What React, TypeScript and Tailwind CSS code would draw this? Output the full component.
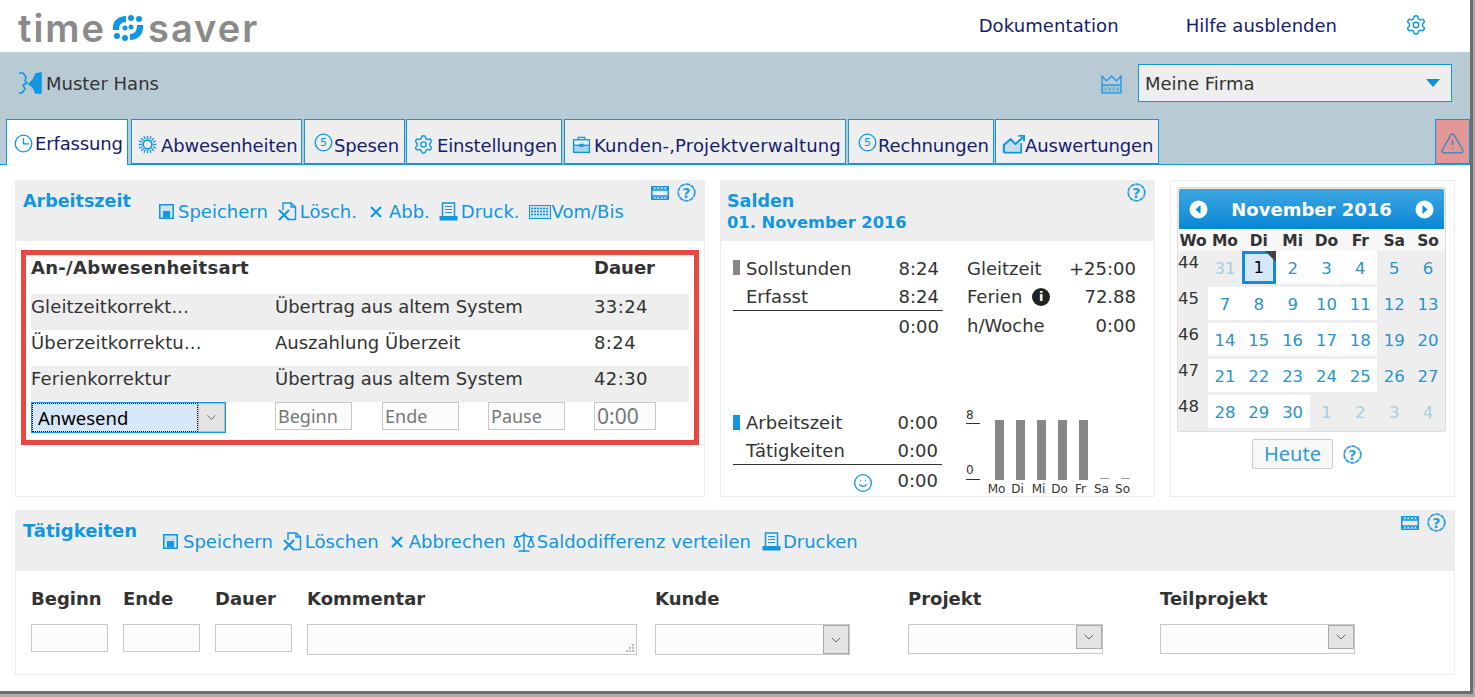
import { ReactNode } from "react";
import { ChevronDown, Scale, Settings, Smile, TriangleAlert } from "lucide-react";

const blue = "#1296e0";

function Svg({ size = 20, children, className = "" }: { size?: number; children: ReactNode; className?: string }) {
  return (
    <svg width={size} height={size} viewBox="0 0 24 24" fill="none" stroke={blue} strokeWidth="1.7" className={`shrink-0 ${className}`}>
      {children}
    </svg>
  );
}

function LogoMark() {
  return (
    <svg width="32" height="29" viewBox="0 0 32 29" className="shrink-0">
      <path d="M1 17 C0 8 6 3 14 3 L14 9 C9 9 7 12 7 17 Z" fill="#1296e0" />
      <path d="M31 12 C32 21 26 27 18 27 L18 21 C23 21 25 17 25 12 Z" fill="#1296e0" />
      <circle cx="19" cy="5" r="3" fill="#1296e0" />
      <circle cx="27" cy="6" r="3" fill="#1296e0" />
      <circle cx="5" cy="23" r="3" fill="#1296e0" />
      <circle cx="13" cy="25" r="3" fill="#1296e0" />
      <circle cx="13" cy="15" r="2.5" fill="#1296e0" />
      <circle cx="19" cy="14" r="2.5" fill="#1296e0" />
    </svg>
  );
}

function PersonIcon() {
  return (
    <svg width="24" height="22" viewBox="0 0 24 22" fill="none" stroke={blue} strokeWidth="1.6" className="shrink-0">
      <path d="M1 1 H5 L8 5 L7 9 L9 11 L5 13 L7 17 L4 21 H1" />
      <path d="M23 1 V21 H18 L15 15 L11 12 L15 8 L18 2 Z" fill={blue} />
    </svg>
  );
}

function ClockIcon() {
  return (
    <Svg size={19}>
      <circle cx="12" cy="12" r="10.5" />
      <path d="M12 5 V12.5 H19" />
    </Svg>
  );
}

function SunIcon() {
  return (
    <Svg size={19}>
      <circle cx="12" cy="12" r="5.5" strokeWidth="2" />
      <path d="M12 1 V5 M12 19 V23 M1 12 H5 M19 12 H23 M4 4 L7 7 M17 17 L20 20 M20 4 L17 7 M7 17 L4 20 M7.5 1.5 L9 5 M16.5 1.5 L15 5 M7.5 22.5 L9 19 M16.5 22.5 L15 19 M1.5 7.5 L5 9 M1.5 16.5 L5 15 M22.5 7.5 L19 9 M22.5 16.5 L19 15" />
    </Svg>
  );
}

function CoinIcon() {
  return (
    <svg width="19" height="19" viewBox="0 0 24 24" fill="none" className="shrink-0 -mt-[4px]">
      <circle cx="12" cy="12" r="10.5" stroke={blue} strokeWidth="1.7" />
      <text x="12" y="17" textAnchor="middle" fontSize="14" fontFamily="DejaVu Sans" fill={blue}>5</text>
    </svg>
  );
}

function GearIcon({ size = 21 }: { size?: number }) {
  return <Settings size={size} color={blue} strokeWidth={1.6} className="shrink-0" />;
}

function CaseIcon() {
  return (
    <Svg size={19}>
      <path d="M8 6 V3 H16 V6" />
      <rect x="2" y="6" width="20" height="16" />
      <path d="M2 13 H22" />
      <rect x="9.5" y="11" width="5" height="4" fill={blue} stroke="none" />
      <path d="M2 14 H22 V22 H2 Z" fill={blue} fillOpacity="0.3" stroke="none" />
    </Svg>
  );
}

function ChartIcon() {
  return (
    <svg width="23" height="20" viewBox="0 0 24 20" fill="none" stroke={blue} strokeWidth="1.8" className="shrink-0">
      <path d="M2 19 V11 L9 5 L14 10 L22 3" strokeWidth="2.2" />
      <path d="M17 1.5 H23 V7" strokeWidth="2" />
      <path d="M2 19 H20 V9" />
      <path d="M3 18 V12 L9 7 L14 12 L19 8 V18 Z" fill={blue} fillOpacity="0.18" stroke="none" />
    </svg>
  );
}

function CrownIcon() {
  return (
    <svg width="21" height="19" viewBox="0 0 21 19" fill="none" stroke={blue} strokeWidth="1.2" className="shrink-0">
      <path d="M1 10 V1 L5.5 6 L10.5 1 L15.5 6 L20 1 V10" />
      <rect x="1" y="10" width="19" height="8" fill={blue} fillOpacity="0.2" />
      <path d="M4 14 H5 M8 14 H9 M12 14 H13 M16 14 H17" strokeWidth="1.5" />
    </svg>
  );
}

function SaveIcon() {
  return (
    <svg width="15" height="15" viewBox="0 0 15 15" fill="none" className="shrink-0">
      <rect x="0.75" y="0.75" width="13.5" height="13.5" stroke={blue} strokeWidth="1.5" fill={blue} fillOpacity="0.15" />
      <rect x="4" y="7" width="7" height="6.5" fill={blue} />
    </svg>
  );
}

function DeleteIcon() {
  return (
    <svg width="19" height="19" viewBox="0 0 19 19" fill="none" stroke={blue} strokeWidth="1.4" className="shrink-0">
      <path d="M5 8 V1 H13 L17.5 5 V17.5 H11" />
      <path d="M13 1 V5 H17.5" />
      <path d="M1 8 L11 18 M11 8 L1 18" strokeWidth="2" />
    </svg>
  );
}

function CrossIcon() {
  return (
    <svg width="14" height="14" viewBox="0 0 14 14" fill="none" stroke={blue} strokeWidth="2.2" className="shrink-0">
      <path d="M2 2 L12 12 M12 2 L2 12" />
    </svg>
  );
}

function PrintIcon() {
  return (
    <svg width="19" height="19" viewBox="0 0 19 19" fill="none" stroke={blue} className="shrink-0">
      <path d="M3.5 14 V1 H15.5 V14" strokeWidth="1.5" />
      <path d="M6 4.5 H13 M6 7.5 H13 M6 10.5 H13" strokeWidth="1.2" />
      <rect x="0.5" y="14" width="18" height="4.5" fill={blue} stroke="none" />
    </svg>
  );
}

function KeysIcon() {
  return (
    <svg width="22" height="14" viewBox="0 0 22 14" fill="none" stroke={blue} className="shrink-0">
      <rect x="0.5" y="0.5" width="21" height="13" fill={blue} fillOpacity="0.15" />
      <path d="M2 3.5 H20 M2 6.5 H20 M2 9.5 H20" strokeWidth="1.5" strokeDasharray="2 1" />
    </svg>
  );
}

function FilmIcon() {
  return (
    <svg width="18" height="14" viewBox="0 0 18 14" fill="none" stroke={blue} className="shrink-0">
      <rect x="0.75" y="0.75" width="16.5" height="12.5" strokeWidth="1.5" />
      <path d="M0.5 4 H17.5 M0.5 10 H17.5" strokeWidth="1.5" />
      <path d="M1 2.4 H17 M1 11.6 H17" strokeWidth="1.5" strokeDasharray="2 1.5" />
    </svg>
  );
}

function HelpIcon({ size = 19 }: { size?: number }) {
  return (
    <svg width={size} height={size} viewBox="0 0 24 24" fill="none" className="shrink-0">
      <circle cx="12" cy="12" r="10.5" stroke="#2a9fe0" strokeWidth="2.2" strokeDasharray="6 0.8" />
      <text x="12" y="18.5" textAnchor="middle" fontSize="18" fontWeight="700" fontFamily="DejaVu Sans" fill="#2a9fe0">?</text>
    </svg>
  );
}

function Tab({ w, ml, pl, gap, icon, label, active, track = "tracking-[-0.15px]" }: { w: string; ml: string; pl: string; gap: string; icon: ReactNode; label: string; active?: boolean; track?: string }) {
  return (
    <div
      className={`${w} ${ml} ${pl} ${gap} flex items-center shrink-0 border border-[#1296e0] ${
        active
          ? "h-[46px] bg-white border-b-0 pt-[2px] -mb-[1px] z-10"
          : "h-[45px] bg-[#eeeeee] pt-[5px]"
      }`}
    >
      {icon}
      <span className={`text-[#14206e] ${track} ${active ? "" : "mt-[2px]"}`}>{label}</span>
    </div>
  );
}

function ToolItem({ icon, label, gap, ml = "" }: { icon: ReactNode; label: string; gap: string; ml?: string }) {
  return (
    <div className={`flex items-center ${gap} ${ml} text-[#1296e0]`}>
      {icon}
      <span>{label}</span>
    </div>
  );
}

function TimeInput({ value, w = "w-[77px]", size = "text-[18px]" }: { value: string; w?: string; size?: string }) {
  return (
    <div className={`${w} ${size} h-[28px] border border-[#c8c8c8] bg-[#fcfcfc] pl-[2px] font-['Noto_Sans',sans-serif] leading-[26px] text-[#777]`}>
      {value}
    </div>
  );
}

function FieldSelect({ h, btnH }: { h: string; btnH: string }) {
  return (
    <div className={`w-[195px] ${h} border border-[#c8c8c8] bg-[#fcfcfc] flex justify-end items-start`}>
      <div className={`w-[26px] ${btnH} border border-[#aaaaaa] bg-[#e4e4e4] flex items-center justify-center`}>
        <ChevronDown size={16} color="#444" strokeWidth={1.2} />
      </div>
    </div>
  );
}

function SaldoRow({ marker, label, value, line, shift }: { marker?: string; label?: ReactNode; value: string; line?: boolean; shift?: string }) {
  return (
    <div className={`flex items-center pr-[4px] ${shift ?? ""} ${line ? "border-b border-[#333] h-[29px]" : "h-[28px]"}`}>
      <div className={`w-[7px] h-[15px] mr-[6px] -mt-[1px] ${marker ?? ""}`} />
      <span>{label}</span>
      <span className="ml-auto">{value}</span>
    </div>
  );
}

function RightRow({ label, value }: { label: ReactNode; value: string }) {
  return (
    <div className="flex items-center h-[28.5px]">
      {label}
      <span className="ml-auto">{value}</span>
    </div>
  );
}

const weeks: { wo: string; days: { d: string; cls: string }[] }[] = [
  ["44", ["31", "1", "2", "3", "4", "5", "6"]],
  ["45", ["7", "8", "9", "10", "11", "12", "13"]],
  ["46", ["14", "15", "16", "17", "18", "19", "20"]],
  ["47", ["21", "22", "23", "24", "25", "26", "27"]],
  ["48", ["28", "29", "30", "1", "2", "3", "4"]],
].map(([wo, days], r) => ({
  wo: wo as string,
  days: (days as string[]).map((d, i) => {
    const muted = (r === 0 && i === 0) || (r === 4 && i > 2);
    const weekend = i > 4;
    return {
      d,
      cls: muted
        ? "text-[#a8cfe2]"
        : weekend
          ? "text-[#2a93c8]"
          : "bg-white text-[#2a93c8]",
    };
  }),
}));

function Calendar() {
  return (
    <div className="w-[269px] h-[245px] border border-[#dddddd] rounded-[2px] bg-[#eeeeee]">
      <div className="h-[40px] mx-[1px] mt-[1px] pt-[1px] bg-gradient-to-b from-[#3ba6e2] to-[#0088d6] rounded-t-[2px] flex items-center justify-between px-[10px] text-white font-bold text-[18px]">
        <svg width="19" height="19" viewBox="0 0 19 19"><circle cx="9.5" cy="9.5" r="9" fill="white" /><path d="M11.5 5 L6.5 9.5 L11.5 14 Z" fill="#0b8fd8" /></svg>
        <span>November 2016</span>
        <svg width="19" height="19" viewBox="0 0 19 19"><circle cx="9.5" cy="9.5" r="9" fill="white" /><path d="M7.5 5 L12.5 9.5 L7.5 14 Z" fill="#0b8fd8" /></svg>
      </div>
      <div className="h-[22px] bg-[#f7f7f7] grid grid-cols-[30px_repeat(7,1fr)] font-bold text-[15.5px] leading-[24px] text-center">
        {["Wo", "Mo", "Di", "Mi", "Do", "Fr", "Sa", "So"].map((d) => (
          <div key={d}>{d}</div>
        ))}
      </div>
      <div className="flex flex-col gap-[3px] text-[16.5px]">
        {weeks.map((week, r) => (
          <div key={week.wo} className="grid grid-cols-[30px_repeat(7,1fr)] h-[33px]">
            <div className="leading-[24px]">{week.wo}</div>
            {week.days.map((day, i) =>
              r === 0 && i === 1 ? (
                <div key={i} className="relative border-[3px] border-[#0b8fd8] bg-[#d6e8f7] text-black flex items-center justify-center pt-[1px]">
                  {day.d}
                  <div className="absolute -top-[3px] -right-[3px] border-t-[11px] border-l-[11px] border-t-[#444] border-l-transparent" />
                </div>
              ) : (
                <div key={i} className={`flex items-center justify-center pt-[3px] ${day.cls}`}>
                  {day.d}
                </div>
              ),
            )}
          </div>
        ))}
      </div>
    </div>
  );
}

const chartDays = ["Mo", "Di", "Mi", "Do", "Fr", "Sa", "So"];

function BarChart() {
  return (
    <div className="ml-[24px] w-[170px] h-[88px] text-[12px] leading-none">
      <div className="flex h-[72px]">
        <div className="w-[15px] flex flex-col justify-between">
          <div className="border-b border-[#333] h-[16px] pt-[1px]">8</div>
          <div className="border-b border-[#333] h-[16px]">0</div>
        </div>
        <div className="ml-[9px] flex items-end">
          {chartDays.map((d, i) => (
            <div key={d} className="w-[21px] flex justify-center">
              <div className={i < 5 ? "w-[9px] h-[60px] bg-[#878787]" : "w-[9px] h-[1px] mb-[1px] bg-[#999]"} />
            </div>
          ))}
        </div>
      </div>
      <div className="flex pl-[20px] pt-[3px]">
        {chartDays.map((d) => (
          <div key={d} className="w-[21px] text-center">{d}</div>
        ))}
      </div>
    </div>
  );
}

export default function App() {
  return (
    <div className="w-[1475px] h-[697px] overflow-hidden bg-[#aaaaaa] font-['DejaVu_Sans',sans-serif] text-[18px] text-[#333]">
      <div className="w-[1473px] h-[694px] border-r-[3px] border-b-[3px] border-[#6e6e6e] bg-white flex flex-col">
        {/* top bar */}
        <header className="h-[52px] flex items-center shrink-0 pl-[18px] pr-[43px]">
          <div className="self-start flex items-start font-['Inter',sans-serif] font-semibold text-[#8a8a8a] text-[38px] tracking-[2px]">
            <span>time</span>
            <span className="ml-[6px] mr-[4px] mt-[13px]"><LogoMark /></span>
            <span>saver</span>
          </div>
          <a className="ml-auto -mt-[2px] text-[#14206e] tracking-[0.1px]">Dokumentation</a>
          <a className="ml-[67px] -mt-[2px] text-[#14206e]">Hilfe ausblenden</a>
          <span className="ml-[68px] -mt-[3px]"><GearIcon size={22} /></span>
        </header>

        {/* user + tabs */}
        <div className="h-[113px] shrink-0 bg-[#b8cbd5] flex flex-col border-b border-[#1296e0]">
          <div className="h-[67px] shrink-0 flex items-center pl-[18px] pr-[18px] pb-[5px]">
            <PersonIcon />
            <span className="ml-[4px]">Muster Hans</span>
            <span className="ml-auto mt-[3px]"><CrownIcon /></span>
            <div className="ml-[16px] w-[314px] h-[38px] border border-[#1296e0] bg-[#eeeeee] flex items-center pl-[6px] pr-[11px]">
              Meine Firma
              <div className="ml-auto border-t-[8px] border-x-[7px] border-t-[#0b8fd8] border-x-transparent" />
            </div>
          </div>
          <div className="flex items-end h-[45px] pl-[6px]">
            <Tab w="w-[122px]" ml="ml-0" pl="pl-[7px]" gap="gap-[2px]" icon={<ClockIcon />} label="Erfassung" active />
            <Tab w="w-[171px]" ml="ml-[3px]" pl="pl-[6px]" gap="gap-[4px]" icon={<SunIcon />} label="Abwesenheiten" />
            <Tab w="w-[101px]" ml="ml-[2px]" pl="pl-[9px]" gap="gap-[1px]" icon={<CoinIcon />} label="Spesen" />
            <Tab w="w-[156px]" ml="ml-[1px]" pl="pl-[6px]" gap="gap-[3px]" icon={<GearIcon />} label="Einstellungen" />
            <Tab w="w-[282px]" ml="ml-[2px]" pl="pl-[7px]" gap="gap-[3px]" icon={<CaseIcon />} label="Kunden-,Projektverwaltung" track="tracking-[0.15px]" />
            <Tab w="w-[146px]" ml="ml-[2px]" pl="pl-[9px]" gap="gap-[1px]" icon={<CoinIcon />} label="Rechnungen" />
            <Tab w="w-[164px]" ml="ml-[1px]" pl="pl-[6px]" gap="gap-0" icon={<ChartIcon />} label="Auswertungen" />
            <div className="ml-auto w-[35px] h-[45px] bg-[#e29696] border border-[#1296e0] flex items-center justify-center pt-[4px]">
              <TriangleAlert size={25} color="#2a86c8" strokeWidth={1.2} />
            </div>
          </div>
        </div>

        {/* panels */}
        <main className="flex-1 pl-[15px] pr-[15px] pt-[15px] flex flex-col gap-[13px]">
          <div className="flex gap-[15px] h-[317px]">
            {/* Arbeitszeit */}
            <section className="w-[690px] flex flex-col border border-[#eeeeee]">
              <div className="h-[60px] shrink-0 bg-[#eeeeee] flex pl-[7px] pr-[8px]">
                <h2 className="font-bold text-[#1296e0] text-[17.5px] leading-[20px] pt-[10px] w-[136px] shrink-0">Arbeitszeit</h2>
                <div className="flex items-center h-[21px] mt-[20px]">
                  <ToolItem icon={<SaveIcon />} label="Speichern" gap="gap-[4px]" />
                  <ToolItem icon={<DeleteIcon />} label="Lösch." gap="gap-[3px]" ml="ml-[10px]" />
                  <ToolItem icon={<CrossIcon />} label="Abb." gap="gap-[6px]" ml="ml-[12px]" />
                  <ToolItem icon={<PrintIcon />} label="Druck." gap="gap-[3px]" ml="ml-[9px]" />
                  <ToolItem icon={<KeysIcon />} label="Vom/Bis" gap="gap-[1px]" ml="ml-[9px]" />
                </div>
                <div className="ml-auto flex items-center gap-[8px] h-[19px] mt-[2px]">
                  <FilmIcon />
                  <HelpIcon />
                </div>
              </div>
              <div className="mx-[5px] mt-[9px] h-[195px] border-[5px] border-[#e9473f] px-[5px] pt-[3px]">
                <div className="h-[36px] grid grid-cols-[244px_319px_1fr] items-start leading-[20px] font-bold">
                  <span className="tracking-[0.3px]">An-/Abwesenheitsart</span>
                  <span />
                  <span>Dauer</span>
                </div>
                {[
                  ["Gleitzeitkorrekt...", "Übertrag aus altem System", "33:24", "bg-[#eeeeee]"],
                  ["Überzeitkorrektu...", "Auszahlung Überzeit", "8:24", ""],
                  ["Ferienkorrektur", "Übertrag aus altem System", "42:30", "bg-[#eeeeee]"],
                ].map(([a, b, c, bg]) => (
                  <div key={a} className={`h-[36px] grid grid-cols-[244px_319px_1fr] items-start leading-[26px] ${bg}`}>
                    <span className="tracking-[0.15px]">{a}</span>
                    <span>{b}</span>
                    <span className="tracking-[0.4px]">{c}</span>
                  </div>
                ))}
                <div className="flex items-start">
                  <div className="w-[195px] h-[31px] flex border border-[#1296e0] shrink-0">
                    <div className="flex-1 bg-[#d6e8f7] border border-dotted border-black pl-[5px] font-['Noto_Sans',sans-serif] text-[18.5px] leading-[28px] text-black">Anwesend</div>
                    <div className="w-[27px] bg-[#e4e4e4] border border-[#bbbbbb] flex items-center justify-center">
                      <ChevronDown size={15} color="#444" strokeWidth={1.2} />
                    </div>
                  </div>
                  <div className="ml-[49px] flex">
                    <TimeInput value="Beginn" />
                    <div className="ml-[30px]"><TimeInput value="Ende" /></div>
                    <div className="ml-[29px]"><TimeInput value="Pause" /></div>
                    <div className="ml-[29px]"><TimeInput value="0:00" w="w-[62px]" size="text-[21px]" /></div>
                  </div>
                </div>
              </div>
            </section>

            {/* Salden */}
            <section className="w-[435px] flex flex-col border border-[#eeeeee]">
              <div className="h-[60px] shrink-0 bg-[#eeeeee] flex pl-[6px] pr-[8px]">
                <h2 className="font-bold text-[#1296e0] leading-[22px] pt-[9px]">
                  <span className="block text-[17.5px]">Salden</span>
                  <span className="block text-[16.3px]">01. November 2016</span>
                </h2>
                <div className="ml-auto mt-[2px]"><HelpIcon /></div>
              </div>
              <div className="flex-1 pl-[12px] pr-[18px] pt-[13px]">
                <div className="flex">
                  <div className="w-[210px]">
                    <SaldoRow marker="bg-[#878787]" label="Sollstunden" value="8:24" />
                    <SaldoRow label="Erfasst" value="8:24" line />
                    <SaldoRow value="0:00" shift="pt-[2px]" />
                  </div>
                  <div className="ml-[24px] flex-1">
                    <RightRow label={<span>Gleitzeit</span>} value="+25:00" />
                    <RightRow
                      label={
                        <span className="flex items-center gap-[10px]">
                          Ferien
                          <span className="w-[18px] h-[18px] rounded-full bg-[#222] text-white text-[13px] font-bold flex items-center justify-center">i</span>
                        </span>
                      }
                      value="72.88"
                    />
                    <RightRow label={<span>h/Woche</span>} value="0:00" />
                  </div>
                </div>
                <div className="flex mt-[68px]">
                  <div className="w-[210px]">
                    <SaldoRow marker="bg-[#1296e0]" label="Arbeitszeit" value="0:00" shift="pt-[2px]" />
                    <SaldoRow label="Tätigkeiten" value="0:00" line shift="pt-[2px]" />
                    <div className="flex items-center h-[32px] pr-[4px]">
                      <span className="ml-auto mr-[25px] mt-[4px]"><Smile size={20} color={blue} strokeWidth={1.6} /></span>
                      <span>0:00</span>
                    </div>
                  </div>
                  <BarChart />
                </div>
              </div>
            </section>

            {/* Kalender */}
            <section className="w-[285px] border border-[#eeeeee] pt-[6px] pl-[6px]">
              <Calendar />
              <div className="flex items-center mt-[7px] ml-[75px]">
                <div className="w-[81px] h-[30px] border border-[#cccccc] rounded-[2px] bg-[#f8f8f8] text-center font-['Noto_Sans',sans-serif] text-[20px] leading-[28px] text-[#2f9bd5]">Heute</div>
                <span className="ml-[10px]"><HelpIcon /></span>
              </div>
            </section>
          </div>

          {/* Tätigkeiten */}
          <section className="h-[165px] border border-[#eeeeee]">
            <div className="h-[60px] bg-[#eeeeee] flex pl-[7px] pr-[8px]">
              <h2 className="font-bold text-[#1296e0] text-[18px] leading-[20px] pt-[10px] w-[140px] shrink-0">Tätigkeiten</h2>
              <div className="flex items-center h-[21px] mt-[20px]">
                <ToolItem icon={<SaveIcon />} label="Speichern" gap="gap-[5px]" />
                <ToolItem icon={<DeleteIcon />} label="Löschen" gap="gap-[3px]" ml="ml-[10px]" />
                <ToolItem icon={<CrossIcon />} label="Abbrechen" gap="gap-[5px]" ml="ml-[11px]" />
                <ToolItem icon={<Scale size={24} color={blue} strokeWidth={1.5} />} label="Saldodifferenz verteilen" gap="gap-[1px]" ml="ml-[6px]" />
                <ToolItem icon={<PrintIcon />} label="Drucken" gap="gap-[2px]" ml="ml-[11px]" />
              </div>
              <div className="ml-auto flex items-center gap-[8px] h-[19px] mt-[2px]">
                <FilmIcon />
                <HelpIcon />
              </div>
            </div>
            <div className="grid grid-cols-[92px_92px_92px_348px_253px_252px_1fr] pl-[15px] pt-[15px]">
              {["Beginn", "Ende", "Dauer", "Kommentar", "Kunde", "Projekt", "Teilprojekt"].map((l) => (
                <div key={l} className="font-bold h-[38px] leading-[25px]">{l}</div>
              ))}
              <div className="w-[77px] h-[28px] border border-[#c8c8c8] bg-[#fcfcfc]" />
              <div className="w-[77px] h-[28px] border border-[#c8c8c8] bg-[#fcfcfc]" />
              <div className="w-[77px] h-[28px] border border-[#c8c8c8] bg-[#fcfcfc]" />
              <div className="relative w-[330px] h-[31px] border border-[#c8c8c8] bg-[#fcfcfc]">
                <div className="absolute right-[2px] bottom-[2px] grid grid-cols-3 gap-[1px]">
                  {[0, 0, 1, 0, 1, 1, 1, 1, 1].map((on, i) => (
                    <div key={i} className={`w-[2px] h-[2px] ${on ? "bg-[#bbbbbb]" : ""}`} />
                  ))}
                </div>
              </div>
              <FieldSelect h="h-[31px]" btnH="h-[29px]" />
              <FieldSelect h="h-[30px]" btnH="h-[24px]" />
              <FieldSelect h="h-[30px]" btnH="h-[24px]" />
            </div>
          </section>
        </main>
      </div>
    </div>
  );
}
